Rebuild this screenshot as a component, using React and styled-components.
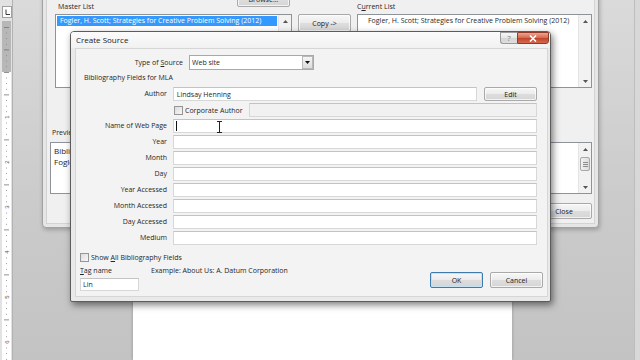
import React from 'react';
import styled, { createGlobalStyle, css } from 'styled-components';

const uiFont = `"Open Sans", "Noto Sans", "DejaVu Sans", sans-serif`;

const GlobalStyle = createGlobalStyle`
  html, body {
    margin: 0;
    padding: 0;
    background: #c8c8c8;
  }
  #root {
    width: 640px;
    height: 360px;
  }
`;

const Screen = styled.div`
  position: relative;
  width: 640px;
  height: 360px;
  overflow: hidden;
  display: flex;
  font-family: ${uiFont};
  font-size: 7px;
  color: #262626;
`;

/* word backdrop */

const RulerColumn = styled.div`
  flex: none;
  width: 13px;
  height: 100%;
  background: #e2e2e2;
  border-right: 1px solid #b2b2b2;
  box-sizing: border-box;
`;

const Workspace = styled.div`
  flex: 1;
  display: flex;
  padding-left: 120px;
  background: linear-gradient(#dadada, #cbcbcb 55%, #c3c3c3);
`;

const Page = styled.div`
  width: 379px;
  background: #fff;
  box-shadow: 0 0 3px rgba(0, 0, 0, 0.25);
`;

const SideStrip = styled.div`
  margin-left: auto;
  width: 5px;
  background: #d8d8d8;
  border-left: 1px solid #bdbdbd;
`;

/* shared controls */

const Button = styled.button`
  box-sizing: border-box;
  width: ${(p) => p.$w || 53}px;
  height: ${(p) => p.$h || 16}px;
  padding: 0;
  font-family: ${uiFont};
  font-size: 7px;
  color: #222;
  border: 1px solid #a9a9a9;
  border-radius: 2px;
  background: linear-gradient(#f7f7f7, #ececec 48%, #dddddd 52%, #d5d5d5);
  box-shadow: inset 0 0 0 1px rgba(255, 255, 255, 0.7);
  ${(p) => p.$primary && css`
    border-color: #3d7bad;
    box-shadow: inset 0 0 0 1px #c4e2f5;
  `}
`;

const ListBox = styled.div`
  box-sizing: border-box;
  display: flex;
  height: ${(p) => p.$h}px;
  border: 1px solid #8e939a;
  background: #fff;
`;

const ListItems = styled.div`
  flex: 1;
  min-width: 0;
  overflow: hidden;
`;

const ListRow = styled.div`
  height: 10px;
  margin: 1px;
  padding-left: ${(p) => p.$indent || 3}px;
  line-height: 10px;
  white-space: nowrap;
  color: ${(p) => (p.$selected ? '#fff' : '#2a2a2a')};
  background: ${(p) => (p.$selected ? '#3399ff' : 'transparent')};
`;

const ScrollTrack = styled.div`
  flex: none;
  width: 12px;
  display: flex;
  flex-direction: column;
  align-items: center;
  background: #f2f2f2;
  border-left: 1px solid #e4e4e4;
`;

const ScrollArrow = styled.div`
  height: 12px;
  display: flex;
  align-items: center;
  justify-content: center;
  margin-top: ${(p) => (p.$down ? 'auto' : '0')};
`;

const ScrollThumb = styled.div`
  box-sizing: border-box;
  width: 10px;
  height: 14px;
  margin-top: 2px;
  border: 1px solid #a8a8a8;
  border-radius: 2px;
  background: linear-gradient(90deg, #f2f2f2, #dcdcdc);
  display: flex;
  flex-direction: column;
  justify-content: center;
  align-items: center;
  gap: 1px;
  span {
    width: 5px;
    height: 1px;
    background: #8d8d8d;
  }
`;

const Arrow = ({ down }) => (
  <ScrollArrow $down={down}>
    <svg width="5" height="3" viewBox="0 0 5 3">
      <path d={down ? 'M0 0H5L2.5 3Z' : 'M0 3H5L2.5 0Z'} fill="#555" />
    </svg>
  </ScrollArrow>
);

const Scrollbar = ({ thumb }) => (
  <ScrollTrack>
    <Arrow />
    {thumb && (
      <ScrollThumb>
        <span />
        <span />
        <span />
      </ScrollThumb>
    )}
    <Arrow down />
  </ScrollTrack>
);

/* source manager (behind) */

const ManagerWindow = styled.div`
  position: absolute;
  left: 42px;
  top: -14px;
  width: 557px;
  height: 242px;
  box-sizing: border-box;
  padding: 3px;
  background: #e6e6e6;
  border: 1px solid #a2a2a2;
  border-radius: 0 0 4px 4px;
  box-shadow: 1px 2px 4px rgba(0, 0, 0, 0.22);
`;

const ManagerBody = styled.div`
  height: 100%;
  box-sizing: border-box;
  padding: 0 2px 0 3px;
  background: #f0f0f0;
  border: 1px solid #d3d3d3;
`;

const ListsGrid = styled.div`
  display: grid;
  grid-template-columns: 237px 53px 235px;
  grid-template-rows: 23px 74px;
  column-gap: 6px;
  margin-left: 5px;
`;

const ListHeader = styled.div`
  display: flex;
  align-items: flex-end;
  justify-content: space-between;
`;

const SmallLabel = styled.div`
  line-height: 9px;
  margin: 0 0 3px ${(p) => p.$indent || 0}px;
  white-space: nowrap;
`;

const HeaderButton = styled(Button)`
  height: 15px;
  margin: 0 2px 7px 0;
`;

const CopyButton = styled(Button)`
  align-self: start;
`;

const PreviewLabel = styled.div`
  margin: 40px 0 0 2px;
  line-height: 9px;
`;

const PreviewBox = styled(ListBox)`
  margin-top: 5px;
  width: 542px;
`;

const PreviewText = styled.div`
  flex: 1;
  padding: 2px 0 0 3px;
  font-size: 8px;
  line-height: 11px;
  white-space: nowrap;
  overflow: hidden;
  color: #1c1c1c;
`;

const ManagerFooter = styled.div`
  display: flex;
  justify-content: flex-end;
  margin-top: 9px;
`;

/* create source dialog */

const SourceWindow = styled.div`
  position: absolute;
  left: 70px;
  top: 31px;
  width: 481px;
  height: 271px;
  box-sizing: border-box;
  display: flex;
  flex-direction: column;
  border: 1px solid #5c5c5c;
  border-radius: 4px 4px 2px 2px;
  background: #e9e9e9;
  box-shadow: 2px 3px 7px rgba(0, 0, 0, 0.5);
`;

const TitleBar = styled.div`
  flex: none;
  height: 16px;
  display: flex;
  align-items: flex-start;
  background: linear-gradient(#fbfbfb, #f1f1f1);
  border-radius: 3px 3px 0 0;
`;

const TitleText = styled.div`
  padding-left: 5px;
  font-size: 8px;
  line-height: 16px;
  color: #1a1a1a;
`;

const CaptionButtons = styled.div`
  display: flex;
  margin: 0 1px 0 auto;
`;

const CaptionButton = styled.div`
  box-sizing: border-box;
  height: 12px;
  display: flex;
  align-items: center;
  justify-content: center;
  ${(p) => (p.$close
    ? css`
      width: 32px;
      border: 1px solid #8e3b2a;
      border-radius: 0 0 3px 0;
      background: linear-gradient(#eba594, #d5664c 50%, #c4452b 55%, #d46a50);
    `
    : css`
      width: 17px;
      border: 1px solid #9a9a9a;
      border-right: none;
      border-radius: 0 0 0 3px;
      background: linear-gradient(#f6f6f6, #e6e6e6 50%, #d6d6d6 55%, #dedede);
      color: #7a7a7a;
      font-size: 8px;
      line-height: 10px;
    `)}
`;

const FrameBody = styled.div`
  flex: 1;
  display: flex;
  padding: 0 2px 4px 4px;
`;

const Panel = styled.div`
  flex: 1;
  display: flex;
  flex-direction: column;
  background: #f3f3f3;
  border: 1px solid #d6d6d6;
`;

const TypeRow = styled.div`
  display: grid;
  grid-template-columns: 107px 125px;
  column-gap: 6px;
  margin-top: 6px;
  height: 15px;
`;

const FieldLabel = styled.div`
  text-align: right;
  line-height: ${(p) => p.$lh || 14}px;
  white-space: nowrap;
`;

const SelectBox = styled.div`
  box-sizing: border-box;
  display: flex;
  align-items: center;
  border: 1px solid #a9a9a9;
  background: #fff;
  padding-left: 2px;
  span {
    flex: 1;
  }
`;

const SelectArrow = styled.div`
  box-sizing: border-box;
  width: 11px;
  height: 13px;
  display: flex;
  align-items: center;
  justify-content: center;
  border: 1px solid #b9b9b9;
  background: linear-gradient(#f5f5f5, #dcdcdc);
`;

const SectionLabel = styled.div`
  margin: 3px 0 0 8px;
  line-height: 9px;
`;

const FieldGrid = styled.div`
  display: grid;
  grid-template-columns: 91px 364px;
  grid-auto-rows: 14px;
  column-gap: 6px;
  row-gap: 2px;
  margin-top: 5px;
`;

const FieldInput = styled.div`
  box-sizing: border-box;
  height: ${(p) => p.$h || 14}px;
  width: ${(p) => (p.$w ? `${p.$w}px` : 'auto')};
  flex: ${(p) => (p.$w ? 'none' : '1')};
  display: flex;
  align-items: center;
  padding-left: 1px;
  border: 1px solid #d7d7d7;
  border-top-color: #c3c3c3;
  background: ${(p) => (p.$disabled ? '#f1f1f1' : '#fff')};
  white-space: nowrap;
  color: #1f1f1f;
`;

const Caret = styled.span`
  width: 1px;
  height: 10px;
  margin-left: 1px;
  background: #111;
`;

const FieldCell = styled.div`
  display: flex;
  align-items: center;
  gap: ${(p) => p.$gap || 0}px;
`;

const CheckBox = styled.div`
  box-sizing: border-box;
  flex: none;
  width: 9px;
  height: 9px;
  margin-left: ${(p) => p.$offset || 0}px;
  border: 1px solid #969696;
  background: linear-gradient(135deg, #dcdcdc, #f7f7f7);
`;

const CheckText = styled.span`
  margin-left: 2px;
  white-space: nowrap;
`;

const DisabledSlot = styled(FieldInput)`
  margin-left: auto;
`;

const Footer = styled.div`
  display: flex;
  align-items: flex-end;
  justify-content: space-between;
  margin-top: 8px;
  padding: 0 4px;
`;

const FooterLeft = styled.div`
  display: flex;
  flex-direction: column;
`;

const CheckRow = styled.div`
  display: flex;
  align-items: center;
  height: 9px;
`;

const TagRow = styled.div`
  display: flex;
  margin-top: 4px;
  line-height: 9px;
  white-space: nowrap;
`;

const TagLabel = styled.span`
  width: 71px;
`;

const TagInput = styled(FieldInput)`
  margin-top: 3px;
  padding-left: 2px;
`;

const FooterButtons = styled.div`
  display: flex;
  gap: 7px;
  margin-bottom: 3px;
`;

const Cursor = styled.svg`
  position: absolute;
  left: 216px;
  top: 121px;
`;

const rulerTicks = Array.from({ length: 60 }, (_, k) => k - 8);

const VerticalRuler = () => (
  <RulerColumn>
    <svg width="12" height="360" viewBox="0 0 12 360">
      <rect x="2.5" y="6.5" width="9" height="11" fill="#fdfdfd" stroke="#a0a0a0" />
      <path d="M6 9.5V14.5H10" stroke="#3a3a3a" fill="none" strokeWidth="1" />
      <rect x="2" y="21" width="9" height="51" fill="#b7b7b7" />
      <rect x="2" y="72" width="9" height="288" fill="#fff" />
      {rulerTicks.map((i) => {
        const y = 72 + i * 5.625;
        if (i > 0 && i % 8 === 0) {
          return (
            <text
              key={i}
              x="0"
              y="0"
              fontSize="6"
              fill="#555"
              fontFamily="Liberation Sans, sans-serif"
              textAnchor="middle"
              transform={`translate(8.6 ${y}) rotate(-90)`}
            >
              {i / 8}
            </text>
          );
        }
        if (i % 4 === 0) {
          return <rect key={i} x="4" y={y} width="5" height="0.8" fill="#777" />;
        }
        return <rect key={i} x="6" y={y} width="1" height="0.8" fill="#8a8a8a" />;
      })}
    </svg>
  </RulerColumn>
);

const fields = [
  'Name of Web Page',
  'Year',
  'Month',
  'Day',
  'Year Accessed',
  'Month Accessed',
  'Day Accessed',
  'Medium',
];

const citation = 'Fogler, H. Scott; Strategies for Creative Problem Solving (2012)';

const App = () => (
  <Screen>
    <GlobalStyle />
    <VerticalRuler />
    <Workspace>
      <Page />
      <SideStrip />
    </Workspace>

    <ManagerWindow>
      <ManagerBody>
        <ListsGrid>
          <ListHeader>
            <SmallLabel $indent={3}>Master List</SmallLabel>
            <HeaderButton>Browse...</HeaderButton>
          </ListHeader>
          <div />
          <ListHeader>
            <SmallLabel>
              C<u>u</u>rrent List
            </SmallLabel>
          </ListHeader>
          <ListBox $h={74}>
            <ListItems>
              <ListRow $selected>{citation}</ListRow>
            </ListItems>
            <Scrollbar />
          </ListBox>
          <CopyButton $h={18}>Copy -&gt;</CopyButton>
          <ListBox $h={74}>
            <ListItems>
              <ListRow $indent={9}>{citation}</ListRow>
            </ListItems>
            <Scrollbar />
          </ListBox>
        </ListsGrid>
        <PreviewLabel>Preview (APA):</PreviewLabel>
        <PreviewBox $h={52}>
          <PreviewText>
            <div>Bibliography</div>
            <div>Fogler, H. S. (2012). Strategies for Creative Problem Solving.</div>
          </PreviewText>
          <Scrollbar thumb />
        </PreviewBox>
        <ManagerFooter>
          <Button $w={56}>Close</Button>
        </ManagerFooter>
      </ManagerBody>
    </ManagerWindow>

    <SourceWindow>
      <TitleBar>
        <TitleText>Create Source</TitleText>
        <CaptionButtons>
          <CaptionButton>?</CaptionButton>
          <CaptionButton $close>
            <svg width="8" height="7" viewBox="0 0 8 7">
              <path d="M1 0.5L7 6.5M7 0.5L1 6.5" stroke="#fff" strokeWidth="1.6" />
            </svg>
          </CaptionButton>
        </CaptionButtons>
      </TitleBar>
      <FrameBody>
        <Panel>
          <TypeRow>
            <FieldLabel $lh={15}>
              Type of <u>S</u>ource
            </FieldLabel>
            <SelectBox>
              <span>Web site</span>
              <SelectArrow>
                <svg width="5" height="3" viewBox="0 0 5 3">
                  <path d="M0 0H5L2.5 3Z" fill="#111" />
                </svg>
              </SelectArrow>
            </SelectBox>
          </TypeRow>
          <SectionLabel>Bibliography Fields for MLA</SectionLabel>
          <FieldGrid>
            <FieldLabel>Author</FieldLabel>
            <FieldCell $gap={7}>
              <FieldInput>&nbsp;Lindsay Henning</FieldInput>
              <Button $w={53} $h={14}>Edit</Button>
            </FieldCell>
            <div />
            <FieldCell>
              <CheckBox $offset={1} />
              <CheckText>Corporate Author</CheckText>
              <DisabledSlot $w={288} $disabled />
            </FieldCell>
            {fields.map((name, i) => (
              <React.Fragment key={name}>
                <FieldLabel>{name}</FieldLabel>
                <FieldCell>
                  <FieldInput>{i === 0 && <Caret />}</FieldInput>
                </FieldCell>
              </React.Fragment>
            ))}
          </FieldGrid>
          <Footer>
            <FooterLeft>
              <CheckRow>
                <CheckBox />
                <CheckText>
                  Show <u>A</u>ll Bibliography Fields
                </CheckText>
              </CheckRow>
              <TagRow>
                <TagLabel>
                  <u>T</u>ag name
                </TagLabel>
                <span>Example: About Us: A. Datum Corporation</span>
              </TagRow>
              <TagInput $w={59} $h={13}>Lin</TagInput>
            </FooterLeft>
            <FooterButtons>
              <Button $primary>OK</Button>
              <Button>Cancel</Button>
            </FooterButtons>
          </Footer>
        </Panel>
      </FrameBody>
    </SourceWindow>

    <Cursor width="7" height="12" viewBox="0 0 7 12">
      <path d="M1 0.5H6M1 11.5H6M3.5 0.5V11.5" stroke="#222" strokeWidth="1" fill="none" />
    </Cursor>
  </Screen>
);

export default App;
